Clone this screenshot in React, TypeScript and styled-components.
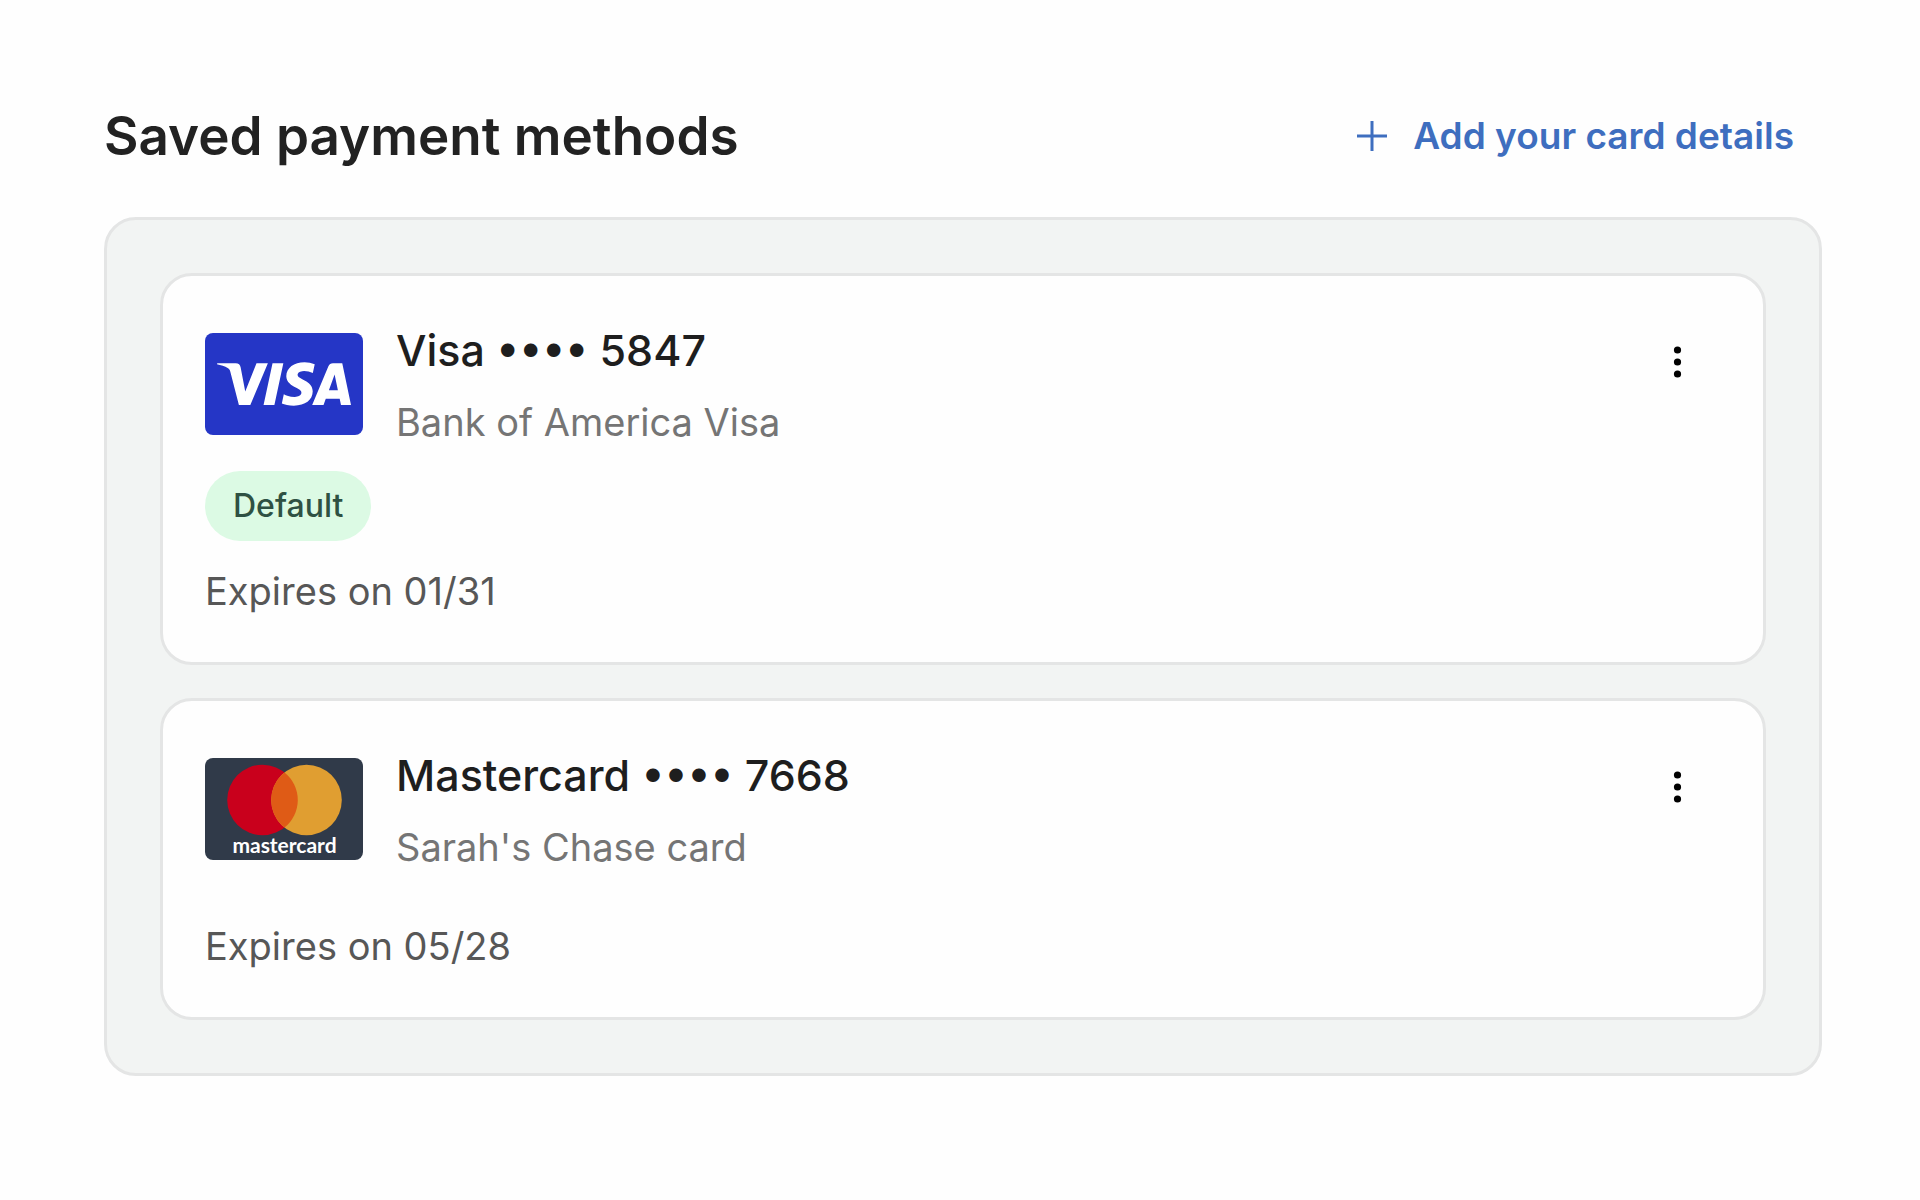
import React from "react";
import styled, { createGlobalStyle } from "styled-components";
import { SiVisa } from "react-icons/si";

const GlobalStyle = createGlobalStyle`
  *, *::before, *::after { box-sizing: border-box; }
  body {
    margin: 0;
    background: #fefefe;
    font-family: Inter, "Liberation Sans", sans-serif;
    -webkit-font-smoothing: antialiased;
  }
  button { font: inherit; border: 0; background: none; cursor: pointer; }
`;

const Page = styled.main`
  padding: 96px 98px 96px 104px;
`;

const Header = styled.header`
  display: flex;
  align-items: center;
  justify-content: space-between;
  height: 80px;
  margin-bottom: 41px;
`;

const Heading = styled.h1`
  margin: 0;
  font-size: 53px;
  font-weight: 600;
  line-height: 80px;
  color: #222222;
`;

const AddButton = styled.button`
  display: flex;
  align-items: center;
  gap: 26px;
  padding: 0 28px;
  font-size: 37px;
  font-weight: 600;
  line-height: 58px;
  color: #3e6ebf;
`;

const Panel = styled.ul`
  display: flex;
  flex-direction: column;
  gap: 33px;
  margin: 0;
  padding: 53px;
  list-style: none;
  background: #f2f4f3;
  border: 3px solid #e4e5e5;
  border-radius: 32px;
`;

const Card = styled.li`
  display: flex;
  align-items: flex-start;
  justify-content: space-between;
  padding: 42px;
  background: #fefefe;
  border: 3px solid #e4e5e5;
  border-radius: 32px;
`;

const Details = styled.div`
  display: flex;
  flex-direction: column;
  gap: 21px;
`;

const Summary = styled.div`
  display: flex;
  align-items: center;
  gap: 33px;
`;

const Logo = styled.div<{ $color: string }>`
  display: flex;
  align-items: center;
  justify-content: center;
  width: 158px;
  height: 102px;
  border-radius: 8px;
  overflow: hidden;
  color: #ffffff;
  background: ${(p) => p.$color};
`;

const Names = styled.div`
  display: flex;
  flex-direction: column;
  gap: 12px;
`;

const CardNumber = styled.h2`
  margin: 0;
  font-size: 43px;
  font-weight: 500;
  line-height: 64px;
  color: #1e1e1e;
`;

const Nickname = styled.p`
  margin: 0;
  font-size: 38px;
  line-height: 56px;
  color: #757575;
`;

const BadgeRow = styled.div`
  display: flex;
`;

const Badge = styled.span`
  padding: 0 28px;
  font-size: 32px;
  font-weight: 500;
  line-height: 70px;
  color: #2f5143;
  background: #dcfae4;
  border-radius: 35px;
`;

const Expiry = styled.p`
  margin: 0;
  font-size: 38px;
  line-height: 58px;
  color: #575757;
`;

const MenuButton = styled.button`
  display: flex;
  align-items: center;
  justify-content: center;
  width: 88px;
  height: 88px;
  padding: 0;
  color: #000000;
`;

const PlusIcon = () => (
  <svg width="30" height="30" viewBox="0 0 30 30" aria-hidden="true">
    <path d="M15 0V30M0 15H30" stroke="currentColor" strokeWidth="3" fill="none" />
  </svg>
);

const KebabIcon = () => (
  <svg width="32" height="32" viewBox="0 0 32 32" fill="currentColor" aria-hidden="true">
    <circle cx="16.5" cy="4" r="3.6" />
    <circle cx="16.5" cy="16" r="3.6" />
    <circle cx="16.5" cy="28" r="3.6" />
  </svg>
);

const VisaLogo = () => (
  <Logo $color="#2536c6">
    <SiVisa size={134} title="Visa" />
  </Logo>
);

const MastercardLogo = () => (
  <Logo $color="#303a49">
    <svg width="158" height="102" viewBox="0 0 158 102">
      <circle cx="57.5" cy="42" r="35.3" fill="#c9001c" />
      <circle cx="101.5" cy="42" r="35.3" fill="#e09e31" />
      <path d="M79.5 14.4A35.3 35.3 0 0 1 79.5 69.6A35.3 35.3 0 0 1 79.5 14.4Z" fill="#df5b16" />
      <text
        x="79.5"
        y="95"
        textAnchor="middle"
        fontFamily="Lato, sans-serif"
        fontSize="21"
        fontWeight="700"
        fill="#ffffff"
      >
        mastercard
      </text>
    </svg>
  </Logo>
);

type Method = {
  brand: string;
  last4: string;
  nickname: string;
  expires: string;
  isDefault?: boolean;
  logo: React.ReactNode;
};

const methods: Method[] = [
  {
    brand: "Visa",
    last4: "5847",
    nickname: "Bank of America Visa",
    expires: "01/31",
    isDefault: true,
    logo: <VisaLogo />,
  },
  {
    brand: "Mastercard",
    last4: "7668",
    nickname: "Sarah's Chase card",
    expires: "05/28",
    logo: <MastercardLogo />,
  },
];

const PaymentMethod = ({ brand, last4, nickname, expires, isDefault, logo }: Method) => (
  <Card>
    <Details>
      <Summary>
        {logo}
        <Names>
          <CardNumber>{`${brand} •••• ${last4}`}</CardNumber>
          <Nickname>{nickname}</Nickname>
        </Names>
      </Summary>
      <BadgeRow>{isDefault && <Badge>Default</Badge>}</BadgeRow>
      <Expiry>{`Expires on ${expires}`}</Expiry>
    </Details>
    <MenuButton type="button" aria-label={`Options for ${brand} ending in ${last4}`}>
      <KebabIcon />
    </MenuButton>
  </Card>
);

export default function App() {
  return (
    <>
      <GlobalStyle />
      <Page>
        <Header>
          <Heading>Saved payment methods</Heading>
          <AddButton type="button">
            <PlusIcon />
            Add your card details
          </AddButton>
        </Header>
        <Panel>
          {methods.map((m) => (
            <PaymentMethod key={m.last4} {...m} />
          ))}
        </Panel>
      </Page>
    </>
  );
}
